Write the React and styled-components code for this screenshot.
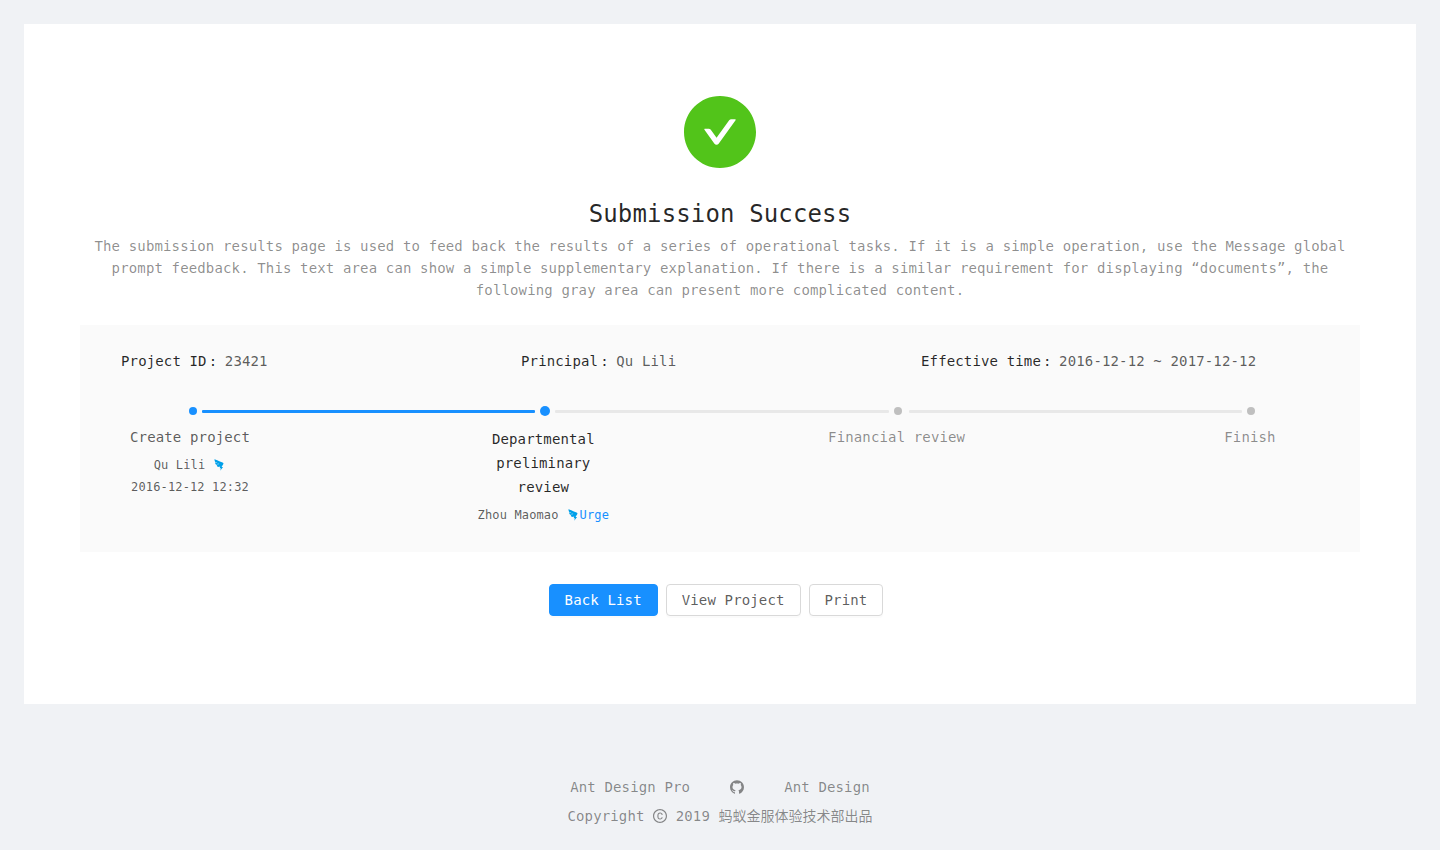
import React from "react";
import styled, { createGlobalStyle } from "styled-components";
import { AiOutlineDingding } from "react-icons/ai";

const GlobalStyle = createGlobalStyle`
    html, body {
        margin: 0;
        padding: 0;
        background: #f0f2f5;
    }
    body {
        font-family: "DejaVu Sans Mono", "Noto Sans CJK SC", monospace;
        font-size: 14px;
        line-height: 22px;
        letter-spacing: 0.01em;
        color: rgba(0, 0, 0, 0.65);
    }
`;

const Page = styled.div`
    min-height: 850px;
    padding: 24px 24px 0;
    box-sizing: border-box;
    overflow: hidden;
`;

const Card = styled.main`
    background: #fff;
    padding: 72px 56px 88px;
    text-align: center;
`;

const ResultIcon = styled.svg`
    display: block;
    width: 72px;
    height: 72px;
    margin: 0 auto 30px;
    fill: #52c41a;
`;

const Title = styled.h1`
    margin: 0 0 5px;
    font-size: 24px;
    font-weight: 400;
    line-height: 32px;
    color: rgba(0, 0, 0, 0.85);
`;

const Description = styled.p`
    margin: 0 0 24px;
    color: rgba(0, 0, 0, 0.45);
`;

const Panel = styled.section`
    background: #fafafa;
    padding: 25px 40px 26px;
    text-align: left;
`;

const InfoRow = styled.div`
    display: grid;
    grid-template-columns: repeat(3, 400px);
    margin-bottom: 34px;
`;

const InfoItem = styled.div`
    padding-left: 1px;
`;

const InfoLabel = styled.span`
    color: rgba(0, 0, 0, 0.85);
`;

const Colon = styled.span`
    margin: 0 -1px 0 2px;
`;

const Track = styled.div`
    display: flex;
    align-items: center;
    gap: 5px;
    height: 10px;
    margin: 0 65px 0 69px;
`;

const Dot = styled.span`
    flex: none;
    width: ${({ $large }) => ($large ? "10px" : "8px")};
    height: ${({ $large }) => ($large ? "10px" : "8px")};
    margin-right: ${({ $spaced }) => ($spaced ? "2px" : "0")};
    border-radius: 50%;
    background: ${({ $active }) => ($active ? "#1890ff" : "#bfbfbf")};
`;

const Line = styled.span`
    flex: ${({ $active }) => ($active ? "0 0 333px" : "1")};
    height: 3px;
    border-radius: 1px;
    background: ${({ $active }) => ($active ? "#1890ff" : "#e8e8e8")};
`;

const StepRow = styled.div`
    display: flex;
    justify-content: space-between;
    margin-top: 10px;
`;

const Step = styled.div`
    width: 140px;
    text-align: center;
`;

const StepTitle = styled.div`
    color: ${({ $state }) =>
        $state === "current"
            ? "rgba(0, 0, 0, 0.85)"
            : $state === "done"
              ? "rgba(0, 0, 0, 0.65)"
              : "rgba(0, 0, 0, 0.45)"};
    line-height: ${({ $state }) => ($state === "current" ? "24px" : "22px")};
    padding: ${({ $state }) => ($state === "current" ? "1px 16px 5px" : "0 0 6px")};
`;

const StepMeta = styled.div`
    font-size: 12px;
    line-height: 22px;
    white-space: nowrap;
    color: rgba(0, 0, 0, 0.65);
`;

const Ding = styled(AiOutlineDingding)`
    width: 14px;
    height: 14px;
    vertical-align: -3px;
    margin: 0 0 0 7px;
    color: #00a0e9;
`;

const Urge = styled.a`
    color: #1890ff;
    cursor: pointer;
`;

const Actions = styled.div`
    margin-top: 32px;
    height: 32px;
`;

const Button = styled.button`
    height: 32px;
    padding: 0 15px;
    margin-right: 8px;
    box-sizing: border-box;
    font: inherit;
    letter-spacing: inherit;
    border-radius: 4px;
    cursor: pointer;
    border: 1px solid ${({ $primary }) => ($primary ? "#1890ff" : "#d9d9d9")};
    background: ${({ $primary }) => ($primary ? "#1890ff" : "#fff")};
    color: ${({ $primary }) => ($primary ? "#fff" : "rgba(0, 0, 0, 0.65)")};
    box-shadow: 0 2px 0 rgba(0, 0, 0, 0.015);
`;

const Footer = styled.footer`
    padding-top: 72px;
    text-align: center;
    color: rgba(0, 0, 0, 0.45);
`;

const FooterLinks = styled.div`
    display: flex;
    justify-content: center;
    align-items: center;
    gap: 40px;
    margin-bottom: 7px;
`;

const FooterLink = styled.a`
    color: rgba(0, 0, 0, 0.45);
    cursor: pointer;
`;

const Glyph = styled.svg`
    width: 14px;
    height: 14px;
    fill: currentColor;
    vertical-align: -2px;
`;

const Cjk = styled.span`
    letter-spacing: 0;
`;

const CHECK =
    "M512 64C264.6 64 64 264.6 64 512s200.6 448 448 448 448-200.6 448-448S759.4 64 512 64zm193.5 301.7l-210.6 292a31.8 31.8 0 0 1-51.7 0L318.5 484.9c-3.8-5.3 0-12.7 6.5-12.7h46.9c10.2 0 19.9 4.9 25.9 13.3l71.2 98.8 157.2-218c6-8.3 15.6-13.3 25.9-13.3H699c6.5 0 10.3 7.4 6.5 12.7z";
const GITHUB =
    "M511.6 76.3C264.3 76.2 64 276.4 64 523.5 64 718.9 189.3 885 363.8 946c23.5 5.9 19.9-10.8 19.9-22.2v-77.5c-135.7 15.9-141.2-73.9-150.3-88.9C215 726 171.5 718 184.5 703c30.9-15.9 62.4 4 98.9 57.9 26.4 39.1 77.9 32.5 104 26 5.7-23.5 17.9-44.5 34.7-60.8-140.6-25.2-199.2-111-199.2-213 0-49.5 16.3-95 48.3-131.7-20.4-60.5 1.9-112.3 4.9-120 58.1-5.2 118.5 41.6 123.2 45.3 33-8.9 70.7-13.6 112.9-13.6 42.4 0 80.2 4.9 113.5 13.9 11.3-8.6 67.3-48.8 121.3-43.9 2.9 7.7 24.7 58.3 5.5 118 32.4 36.8 48.9 82.7 48.9 132.3 0 102.2-59 188.1-200 212.9a127.5 127.5 0 0 1 38.1 91v112.5c.8 9 0 17.9 15 17.9 177.1-59.7 304.6-227 304.6-424.1 0-247.2-200.4-447.3-447.5-447.3z";
const COPYRIGHT =
    "M512 64C264.6 64 64 264.6 64 512s200.6 448 448 448 448-200.6 448-448S759.4 64 512 64zm0 820c-205.4 0-372-166.6-372-372s166.6-372 372-372 372 166.6 372 372-166.6 372-372 372zm5.6-532.7c53 0 89 33.8 93 83.4.3 4.2 3.8 7.4 8 7.4h56.7c2.6 0 4.7-2.1 4.7-4.7 0-86.7-68.4-147.4-162.7-147.4C407.4 290 344 364.2 344 486v52.3C344 658.8 407.4 734 517.3 734c94 0 162.7-58.8 162.7-141.4 0-2.6-2.1-4.7-4.7-4.7h-56.8c-4.2 0-7.6 3.2-8 7.3-4.2 46.1-40.1 77.8-93 77.8-65.3 0-102.1-47.9-102.1-133.6v-52.6c.1-87 37-135.5 102.2-135.5z";

const App = () => {
    return (
        <>
            <GlobalStyle />
            <Page>
                <Card>
                    <ResultIcon viewBox="64 64 896 896">
                        <path d={CHECK} />
                    </ResultIcon>
                    <Title>Submission Success</Title>
                    <Description>
                        The submission results page is used to feed back the results of a series of
                        operational tasks. If it is a simple operation, use the Message global prompt
                        feedback. This text area can show a simple supplementary explanation. If there
                        is a similar requirement for displaying “documents”, the following gray area
                        can present more complicated content.
                    </Description>
                    <Panel>
                        <InfoRow>
                            <InfoItem>
                                <InfoLabel>Project ID<Colon>:</Colon></InfoLabel> 23421
                            </InfoItem>
                            <InfoItem>
                                <InfoLabel>Principal<Colon>:</Colon></InfoLabel> Qu Lili
                            </InfoItem>
                            <InfoItem>
                                <InfoLabel>Effective time<Colon>:</Colon></InfoLabel> 2016-12-12 ~ 2017-12-12
                            </InfoItem>
                        </InfoRow>
                        <Track>
                            <Dot $active />
                            <Line $active />
                            <Dot $active $large />
                            <Line />
                            <Dot $spaced />
                            <Line />
                            <Dot />
                        </Track>
                        <StepRow>
                            <Step>
                                <StepTitle $state="done">Create project</StepTitle>
                                <StepMeta>
                                    Qu Lili
                                    <Ding />
                                </StepMeta>
                                <StepMeta>2016-12-12 12:32</StepMeta>
                            </Step>
                            <Step>
                                <StepTitle $state="current">Departmental preliminary review</StepTitle>
                                <StepMeta>
                                    Zhou Maomao
                                    <Ding />
                                    <Urge>Urge</Urge>
                                </StepMeta>
                            </Step>
                            <Step>
                                <StepTitle>Financial review</StepTitle>
                            </Step>
                            <Step>
                                <StepTitle>Finish</StepTitle>
                            </Step>
                        </StepRow>
                    </Panel>
                    <Actions>
                        <Button $primary>Back List</Button>
                        <Button>View Project</Button>
                        <Button>Print</Button>
                    </Actions>
                </Card>
                <Footer>
                    <FooterLinks>
                        <FooterLink>Ant Design Pro</FooterLink>
                        <FooterLink>
                            <Glyph viewBox="64 64 896 896">
                                <path d={GITHUB} />
                            </Glyph>
                        </FooterLink>
                        <FooterLink>Ant Design</FooterLink>
                    </FooterLinks>
                    <div>
                        Copyright{" "}
                        <Glyph viewBox="64 64 896 896">
                            <path d={COPYRIGHT} />
                        </Glyph>{" "}
                        2019 <Cjk>蚂蚁金服体验技术部出品</Cjk>
                    </div>
                </Footer>
            </Page>
        </>
    );
};

export default App;
